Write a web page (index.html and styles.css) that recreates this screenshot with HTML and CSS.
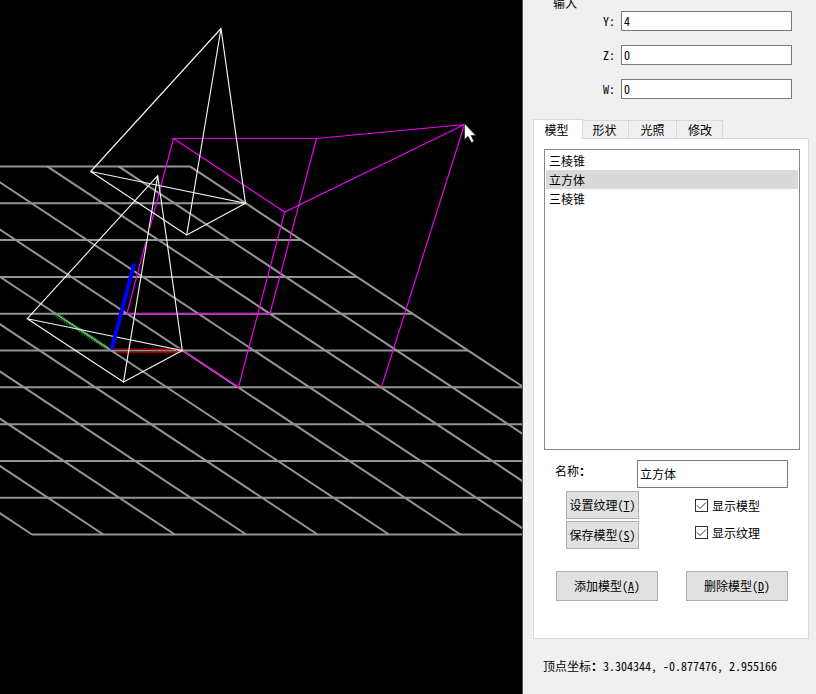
FILE: index.html
```
<!DOCTYPE html>
<html lang="zh-CN">
<head>
<meta charset="utf-8">
<title>模型</title>
<link rel="stylesheet" href="styles.css">
</head>
<body>
<main class="app">
  <section class="viewport">
    <svg width="522" height="694" viewBox="0 0 522 694">
      <g class="grid-lines">
        <path d="M-10 166.5H190M-10 203.3H246M-10 240H301.500M-10 277H357M-10 313.700H413M-10 350.500H468M-10 387.300H524M-10 424.200H524M-10 461H524M-10 497.700H524M32 534.500H524"/>
        <path d="M-524 166.300L32 534.500M-452.600 166.300L103.400 534.500M-381.200 166.300L174.800 534.500M-309.800 166.300L246.200 534.500M-238.400 166.300L317.600 534.500M-167 166.300L389 534.500M-95.600 166.300L460.400 534.500M-24.200 166.300L531.800 534.500M47.200 166.300L603.200 534.500M118.600 166.300L674.600 534.500M190 166.300L746 534.500"/>
      </g>
      <g class="axis-x">
        <path class="rail" d="M114 349H182M117 352.500H182"/>
        <path class="ticks" d="M156 350.500H182"/>
      </g>
      <path class="axis-y" d="M55 312.500L109 347.500M54 315L107 349.500"/>
      <g class="cube">
        <path d="M173.500 138.500H316.500L464.500 124.500L284.700 212Z"/>
        <path d="M316.500 138.500L270 313.500M127 313.500L145.800 242M149.800 228L173.500 138.500M284.700 212L238.500 387L184 351.500M464.500 124.500L381.500 387"/>
        <path class="base" d="M127 313.700H270"/>
      </g>
      <g class="cone">
        <path d="M221 28.500L90.700 171.500L245.500 203.300ZL186.700 235L90.700 171.500M186.700 235L245.500 203.300"/>
        <path d="M157.700 175.700L27.300 318.700L182.300 350.500ZL123.500 382L27.300 318.700M123.500 382L182.300 350.500"/>
      </g>
      <path class="axis-z" d="M134.300 263.500L111.500 349.500"/>
      <path class="cursor" d="M464.500 123.500V139.500L468 136.300L471.500 142.500L474 141.500L471 135.500H475.800Z"/>
    </svg>
  </section>
  <aside class="side">
    <div class="inputs">
      <div class="group-title">输入</div>
      <label class="field"><span>Y:</span><span class="box">4</span></label>
      <label class="field"><span>Z:</span><span class="box">0</span></label>
      <label class="field"><span>W:</span><span class="box">0</span></label>
    </div>
    <nav class="tabs">
      <div class="tab active">模型</div>
      <div class="tab t2">形状</div>
      <div class="tab">光照</div>
      <div class="tab t4">修改</div>
    </nav>
    <div class="page">
      <ul class="list">
        <li>三棱锥</li>
        <li class="selected">立方体</li>
        <li>三棱锥</li>
      </ul>
      <div class="name-row"><span class="name-label">名称<b>：</b></span><span class="box name">立方体</span></div>
      <div class="options">
        <div class="stack">
          <div class="button small">设置纹理(<u>T</u>)</div>
          <div class="button small">保存模型(<u>S</u>)</div>
        </div>
        <div class="checks">
          <div class="check"><svg width="13" height="13"><rect x=".5" y=".5" width="12" height="12"/><path d="M2 6.500L5 9.500L11 3.500"/></svg>显示模型</div>
          <div class="check"><svg width="13" height="13"><rect x=".5" y=".5" width="12" height="12"/><path d="M2 6.500L5 9.500L11 3.500"/></svg>显示纹理</div>
        </div>
      </div>
      <div class="actions">
        <div class="button">添加模型(<u>A</u>)</div>
        <div class="button">删除模型(<u>D</u>)</div>
      </div>
    </div>
    <div class="status">顶点坐标<b>：</b><span>3.304344, -0.877476, 2.955166</span></div>
  </aside>
</main>
</body>
</html>
```
FILE: styles.css
```
* { box-sizing: border-box; }
body {
  margin: 0;
  font: 12px/14px "Noto Sans CJK SC", sans-serif;
  font-feature-settings: "hwid";
  color: #000;
}
.app { display: flex; width: 816px; height: 694px; overflow: hidden; background: #f0f0f0; }
.viewport { flex: none; width: 523px; height: 694px; background: #000; border-right: 1px solid #505050; }
.viewport svg { display: block; fill: none; }
.grid-lines { stroke: #949494; stroke-width: 2; }
.axis-x .rail { stroke: #900000; stroke-width: 1.3; }
.axis-x .ticks { stroke: #f00; stroke-width: 3; stroke-dasharray: 1 4; }
.axis-y { stroke: #00c800; stroke-width: 1.3; stroke-dasharray: 1 1; }
.axis-z { stroke: #00f; stroke-width: 4; }
.cube { stroke: #f000f0; stroke-width: 1.15; }
.cube .base { stroke: #d818d8; stroke-width: 1.4; }
.cone { stroke: #f4f4f4; stroke-width: 1.15; }
.cursor { fill: #fff; stroke: #222; stroke-width: .7; }

.side { flex: none; width: 293px; height: 694px; padding-left: 10px; display: flex; flex-direction: column; white-space: nowrap; }
.inputs { height: 119px; padding: 11px 0 0 20px; display: flex; flex-direction: column; gap: 14px; }
.group-title { height: 14px; margin: -15px 0 -13px; line-height: 14px; }
.field { display: flex; align-items: center; height: 20px; padding-left: 50px; }
.field > span:first-child { width: 18px; }
.box { background: #fff; border: 1px solid #7a7a7a; padding-left: 2px; }
.field .box { width: 171px; height: 20px; line-height: 18px; }

.tabs { display: flex; align-items: flex-end; height: 20px; margin-bottom: -1px; z-index: 1; }
.tab { width: 48px; height: 18px; margin-bottom: 1px; border: 1px solid #d9d9d9; border-left: 0; border-bottom: 0; text-align: center; line-height: 18px; }
.tab.active { width: 50px; height: 20px; margin: 0; border-left: 1px solid #d9d9d9; background: #fff; line-height: 19px; padding-right: 3px; }
.tab.t2 { width: 46px; padding-right: 2px; }
.tab.t4 { width: 46px; padding-left: 1px; }
.page { width: 276px; height: 501px; background: #fff; border: 1px solid #d9d9d9; padding: 10px 8px 0 10px; }
.list { width: 256px; height: 301px; margin: 0; padding: 1px; border: 1px solid #828790; list-style: none; }
.list li { height: 19px; line-height: 19px; padding-left: 3px; }
.list .selected { background: #d9d9d9; }
.name-row { display: flex; width: 256px; height: 28px; margin-top: 10px; padding-left: 11px; }
.name-label { width: 82px; line-height: 22px; }
.name { width: 151px; height: 28px; line-height: 26px; }
.options { display: flex; margin-top: 3px; padding-left: 22px; }
.stack { display: grid; gap: 2px; width: 129px; }
.button { width: 102px; height: 30px; border: 1px solid #adadad; background: #e1e1e1; text-align: center; line-height: 28px; }
.button.small { width: 73px; height: 28px; line-height: 26px; }
.button u { text-underline-offset: 1px; }
.checks { padding-top: 8px; display: grid; align-content: start; gap: 13px; }
.check { display: flex; align-items: flex-start; height: 14px; gap: 4px; }
.check svg { fill: none; stroke: #333; }
.actions { display: flex; gap: 28px; margin-top: 22px; padding-left: 12px; }
.status { padding: 20px 0 0 10px; }
```
